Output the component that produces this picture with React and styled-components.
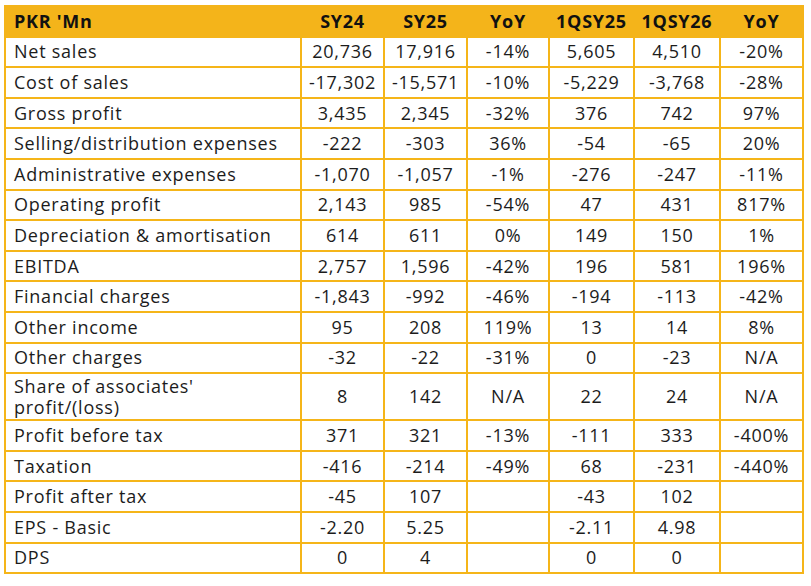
import React from "react";
import styled, { createGlobalStyle } from "styled-components";

const Global = createGlobalStyle`
  html, body { margin: 0; padding: 0; background: #ffffff; }
  body { font-family: "Open Sans", "Noto Sans", sans-serif; }
`;

const Page = styled.div`
  padding: 5px 0 0 4px;
`;

const Table = styled.table`
  border-collapse: collapse;
  table-layout: fixed;
  width: 798px;
  color: #1c1c1c;
  font-size: 18px;
  letter-spacing: 0.75px;
`;

const HeadCell = styled.th`
  background: #f4b41a;
  border: 2px solid #f4b41a;
  border-left-color: ${(p) => (p.$first ? "#f4b41a" : "#f0b01c")};
  height: 28.6px;
  padding: 0 ${(p) => (p.$first ? "8px" : "0")};
  font-weight: 700;
  text-align: ${(p) => (p.$first ? "left" : "center")};
  color: #111;
  white-space: nowrap;
`;

const Cell = styled.td`
  border: 2px solid #f5b519;
  height: ${(p) => (p.$tall ? "45px" : "28.6px")};
  padding: 0 ${(p) => (p.$first ? "8px" : "0")};
  text-align: ${(p) => (p.$first ? "left" : "center")};
  line-height: 21px;
  font-weight: 400;
  white-space: nowrap;
`;

const cols = [296, 83, 83, 82, 85, 86, 83];
const head = ["PKR 'Mn", "SY24", "SY25", "YoY", "1QSY25", "1QSY26", "YoY"];

const rows = [
  ["Net sales", "20,736", "17,916", "-14%", "5,605", "4,510", "-20%"],
  ["Cost of sales", "-17,302", "-15,571", "-10%", "-5,229", "-3,768", "-28%"],
  ["Gross profit", "3,435", "2,345", "-32%", "376", "742", "97%"],
  ["Selling/distribution expenses", "-222", "-303", "36%", "-54", "-65", "20%"],
  ["Administrative expenses", "-1,070", "-1,057", "-1%", "-276", "-247", "-11%"],
  ["Operating profit", "2,143", "985", "-54%", "47", "431", "817%"],
  ["Depreciation & amortisation", "614", "611", "0%", "149", "150", "1%"],
  ["EBITDA", "2,757", "1,596", "-42%", "196", "581", "196%"],
  ["Financial charges", "-1,843", "-992", "-46%", "-194", "-113", "-42%"],
  ["Other income", "95", "208", "119%", "13", "14", "8%"],
  ["Other charges", "-32", "-22", "-31%", "0", "-23", "N/A"],
  ["Share of associates' profit/(loss)", "8", "142", "N/A", "22", "24", "N/A", true],
  ["Profit before tax", "371", "321", "-13%", "-111", "333", "-400%"],
  ["Taxation", "-416", "-214", "-49%", "68", "-231", "-440%"],
  ["Profit after tax", "-45", "107", "", "-43", "102", ""],
  ["EPS - Basic", "-2.20", "5.25", "", "-2.11", "4.98", ""],
  ["DPS", "0", "4", "", "0", "0", ""],
];

export default function App() {
  return (
    <Page>
      <Global />
      <Table>
        <colgroup>
          {cols.map((w, i) => (
            <col key={i} style={{ width: w }} />
          ))}
        </colgroup>
        <thead>
          <tr>
            {head.map((h, i) => (
              <HeadCell key={i} $first={i === 0}>
                {h}
              </HeadCell>
            ))}
          </tr>
        </thead>
        <tbody>
          {rows.map((r, ri) => {
            const tall = r[7] === true;
            return (
              <tr key={ri}>
                {r.slice(0, 7).map((c, ci) => (
                  <Cell key={ci} $first={ci === 0} $tall={tall}>
                    {tall && ci === 0 ? (
                      <>
                        Share of associates'
                        <br />
                        profit/(loss)
                      </>
                    ) : (
                      c
                    )}
                  </Cell>
                ))}
              </tr>
            );
          })}
        </tbody>
      </Table>
    </Page>
  );
}
